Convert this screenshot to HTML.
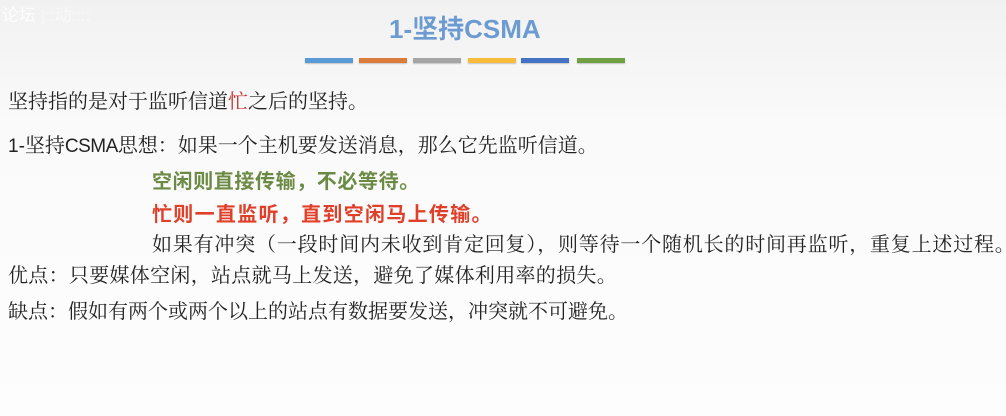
<!DOCTYPE html>
<html><head><meta charset="utf-8"><style>
html,body{margin:0;padding:0}
body{width:1006px;height:416px;overflow:hidden;background:linear-gradient(#f1f1f1,#fafafa 30%,#fdfdfd);position:relative;font-family:"Liberation Serif","Noto Serif CJK SC",serif;color:#222}
.l{position:absolute;white-space:nowrap;font-size:20px;line-height:24px;letter-spacing:0}
.b{font-family:"Liberation Sans","Noto Sans CJK SC",sans-serif;font-weight:bold}
.bar{position:absolute;top:58px;height:5px;width:48px;box-shadow:0 1px 1px rgba(0,0,0,.2)}
</style></head><body>
<div class="l" style="left:2px;top:4px;color:#fff;font-family:'Liberation Sans','Noto Sans CJK SC',sans-serif;font-size:17px;opacity:.9">论坛 <span style="opacity:.5">|::动::::</span></div>
<div class="l b" style="left:389px;top:13px;font-size:26px;line-height:32px;color:#6b9bd0;letter-spacing:0">1-坚持CSMA</div>
<div class="bar" style="left:305px;background:#5b9bd5"></div>
<div class="bar" style="left:359px;background:#db7b3c"></div>
<div class="bar" style="left:413px;background:#a5a5a5"></div>
<div class="bar" style="left:468px;background:#f6bc3a"></div>
<div class="bar" style="left:521px;background:#4472c4"></div>
<div class="bar" style="left:577px;background:#70a044"></div>
<div class="l" style="left:8px;top:90px">坚持指的是对于监听信道<span style="color:#c0302a">忙</span>之后的坚持。</div>
<div class="l" style="left:8px;top:134px"><span style="font-family:'Liberation Sans',sans-serif;font-size:19px">1-</span>坚持<span style="font-family:'Liberation Sans',sans-serif;letter-spacing:-0.5px;font-size:19px">CSMA</span>思想：如果一个主机要发送消息，那么它先监听信道。</div>
<div class="l b" style="left:152px;top:170px;color:#6b8a44;letter-spacing:0.6px">空闲则直接传输，不必等待。</div>
<div class="l b" style="left:152px;top:203px;color:#e0402a;letter-spacing:1.3px">忙则一直监听，直到空闲马上传输。</div>
<div class="l" style="left:152px;top:233px;letter-spacing:0.8px">如果有冲突（一段时间内未收到肯定回复），则等待一个随机长的时间再监听，重复上述过程。</div>
<div class="l" style="left:8px;top:264px;letter-spacing:0.3px">优点：只要媒体空闲，站点就马上发送，避免了媒体利用率的损失。</div>
<div class="l" style="left:8px;top:300px;letter-spacing:0">缺点：假如有两个或两个以上的站点有数据要发送，冲突就不可避免。</div>
</body></html>
